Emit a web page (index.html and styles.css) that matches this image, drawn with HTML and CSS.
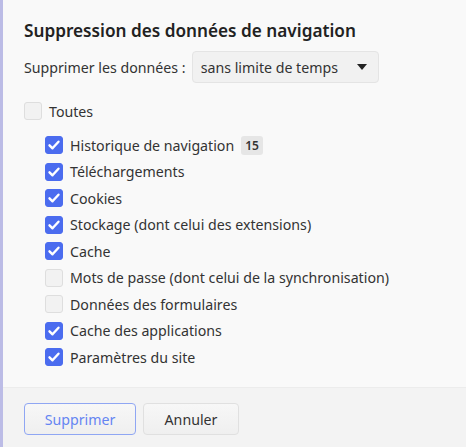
FILE: index.html
```html
<!DOCTYPE html>
<html lang="fr">
<head>
<meta charset="utf-8">
<link rel="stylesheet" href="styles.css">
</head>
<body>
<div class="dialog">
  <div class="content">
    <h1 class="title">Suppression des données de navigation</h1>
    <div class="range">
      <span class="range-label">Supprimer les données :</span>
      <div class="select"><span>sans limite de temps</span><span class="caret"></span></div>
    </div>
    <div class="row all"><span class="cb"></span><span>Toutes</span></div>
    <div class="list">
      <div class="row"><span class="cb on"><svg viewBox="0 0 18 18"><path d="M4.5 9.3l3 3 6-6.6"/></svg></span><span>Historique de navigation</span><span class="badge">15</span></div>
      <div class="row"><span class="cb on"><svg viewBox="0 0 18 18"><path d="M4.5 9.3l3 3 6-6.6"/></svg></span><span>Téléchargements</span></div>
      <div class="row"><span class="cb on"><svg viewBox="0 0 18 18"><path d="M4.5 9.3l3 3 6-6.6"/></svg></span><span>Cookies</span></div>
      <div class="row"><span class="cb on"><svg viewBox="0 0 18 18"><path d="M4.5 9.3l3 3 6-6.6"/></svg></span><span>Stockage (dont celui des extensions)</span></div>
      <div class="row"><span class="cb on"><svg viewBox="0 0 18 18"><path d="M4.5 9.3l3 3 6-6.6"/></svg></span><span>Cache</span></div>
      <div class="row"><span class="cb"></span><span>Mots de passe (dont celui de la synchronisation)</span></div>
      <div class="row"><span class="cb"></span><span>Données des formulaires</span></div>
      <div class="row"><span class="cb on"><svg viewBox="0 0 18 18"><path d="M4.5 9.3l3 3 6-6.6"/></svg></span><span>Cache des applications</span></div>
      <div class="row"><span class="cb on"><svg viewBox="0 0 18 18"><path d="M4.5 9.3l3 3 6-6.6"/></svg></span><span>Paramètres du site</span></div>
    </div>
  </div>
  <div class="footer">
    <button class="btn primary">Supprimer</button>
    <button class="btn">Annuler</button>
  </div>
</div>
</body>
</html>
```
FILE: styles.css
```css
html, body { margin: 0; padding: 0; }
body {
  font-family: "Noto Sans", "Open Sans", sans-serif;
  color: #333;
  background: #f9f9f9;
}
.dialog {
  width: 463px;
  height: 447px;
  border-left: 3px solid #bcbce6;
  background: #f9f9f9;
  display: flex;
  flex-direction: column;
  overflow: hidden;
}
.content {
  flex: 1;
  padding: 19px 0 0 21px;
}
.title {
  margin: 0;
  font-size: 17.2px;
  font-weight: 600;
  line-height: 24px;
  color: #222;
}
.range {
  margin-top: 8px;
  display: flex;
  align-items: center;
  gap: 6px;
  font-size: 14.2px;
}
.select {
  border: 1px solid #e4e4e4;
  border-radius: 4px;
  background: #f1f1f1;
  display: flex;
  align-items: center;
  justify-content: space-between;
  padding: 0 11px 0 8px;
  box-sizing: border-box;
  height: 32px;
  width: 187px;
}
.caret {
  width: 0; height: 0;
  border-left: 5px solid transparent;
  border-right: 5px solid transparent;
  border-top: 6px solid #222;
}
.row {
  display: flex;
  align-items: center;
  height: 26.5px;
  font-size: 14.2px;
  gap: 7px;
}
.all { margin-top: 15px; height: 26px; }
.list { margin-top: 8px; padding-left: 21px; }
.cb {
  width: 18px; height: 18px;
  box-sizing: border-box;
  border: 1px solid #dedede;
  border-radius: 3px;
  background: #f2f2f2;
  flex: none;
  display: flex;
}
.cb.on { background: #4b6cef; border-color: #4b6cef; }
.cb svg { width: 18px; height: 18px; margin: -1px; }
.cb path { fill: none; stroke: #fff; stroke-width: 2.4; stroke-linecap: round; stroke-linejoin: round; }
.badge {
  background: #e6e6e6;
  border-radius: 3px;
  font-size: 12px;
  font-weight: 600;
  padding: 0 4px;
  line-height: 19px;
}
.footer {
  height: 60px;
  flex: none;
  box-sizing: border-box;
  border-top: 1px solid #ececec;
  background: #f3f3f3;
  padding: 15px 0 0 21px;
  display: flex;
  gap: 7px;
  align-items: flex-start;
}
.btn {
  font-family: inherit;
  font-size: 14.2px;
  height: 32px;
  border: 1px solid #e0e0e0;
  border-radius: 4px;
  background: linear-gradient(#f7f7f7, #efefef);
  color: #333;
  padding: 0;
  width: 96px;
}
.btn.primary {
  width: 112px;
  color: #6585f2;
  border-color: #8fa6f3;
}
```
